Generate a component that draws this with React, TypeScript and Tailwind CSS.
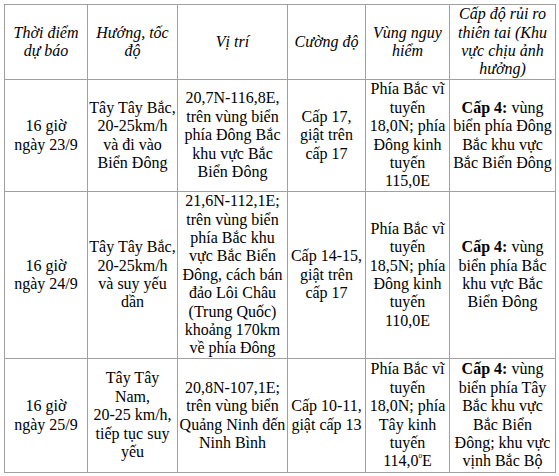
import type { ReactNode } from 'react';

type Cell = { lines: ReactNode[]; italic?: boolean };

const Bold = ({ children }: { children: ReactNode }) => <b className="font-bold">{children}</b>;

const header: Cell[] = [
  { lines: ['Thời điểm', 'dự báo'] },
  { lines: ['Hướng, tốc', 'độ'] },
  { lines: ['Vị trí'] },
  { lines: ['Cường độ'] },
  { lines: ['Vùng nguy', 'hiểm'] },
  { lines: ['Cấp độ rủi ro', 'thiên tai (Khu', 'vực chịu ảnh', 'hưởng)'] },
];

const rows: Cell[][] = [
  [
    { lines: ['16 giờ', 'ngày 23/9'] },
    { lines: ['Tây Tây Bắc,', '20-25km/h', 'và đi vào', 'Biển Đông'] },
    { lines: ['20,7N-116,8E,', 'trên vùng biển', 'phía Đông Bắc', 'khu vực Bắc', 'Biển Đông'] },
    { lines: ['Cấp 17,', 'giật trên', 'cấp 17'] },
    { lines: ['Phía Bắc vĩ', 'tuyến', '18,0N; phía', 'Đông kinh', 'tuyến', '115,0E'] },
    {
      lines: [
        <>
          <Bold>Cấp 4:</Bold> vùng
        </>,
        'biển phía Đông',
        'Bắc khu vực',
        'Bắc Biển Đông',
      ],
    },
  ],
  [
    { lines: ['16 giờ', 'ngày 24/9'] },
    { lines: ['Tây Tây Bắc,', '20-25km/h', 'và suy yếu', 'dần'] },
    {
      lines: [
        '21,6N-112,1E;',
        'trên vùng biển',
        'phía Bắc khu',
        'vực Bắc Biển',
        'Đông, cách bán',
        'đảo Lôi Châu',
        '(Trung Quốc)',
        'khoảng 170km',
        'về phía Đông',
      ],
    },
    { lines: ['Cấp 14-15,', 'giật trên', 'cấp 17'] },
    { lines: ['Phía Bắc vĩ', 'tuyến', '18,5N; phía', 'Đông kinh', 'tuyến', '110,0E'] },
    {
      lines: [
        <>
          <Bold>Cấp 4:</Bold> vùng
        </>,
        'biển phía Bắc',
        'khu vực Bắc',
        'Biển Đông',
      ],
    },
  ],
  [
    { lines: ['16 giờ', 'ngày 25/9'] },
    { lines: ['Tây Tây', 'Nam,', '20-25 km/h,', 'tiếp tục suy', 'yếu'] },
    { lines: ['20,8N-107,1E;', 'trên vùng biển', 'Quảng Ninh đến', 'Ninh Bình'] },
    { lines: ['Cấp 10-11,', 'giật cấp 13'] },
    {
      lines: [
        'Phía Bắc vĩ',
        'tuyến',
        '18,0N; phía',
        'Tây kinh',
        'tuyến',
        <>
          114,0<sup className="text-[7px] align-[5px]">0</sup>E
        </>,
      ],
    },
    {
      lines: [
        <>
          <Bold>Cấp 4:</Bold> vùng
        </>,
        'biển phía Tây',
        'Bắc khu vực',
        'Bắc Biển',
        'Đông; khu vực',
        'vịnh Bắc Bộ',
      ],
    },
  ],
];

function TableCell({ cell, italic }: { cell: Cell; italic?: boolean }) {
  return (
    <div className="bg-white flex flex-col items-center justify-center text-center">
      {cell.lines.map((line, i) => (
        <span key={i} className={`whitespace-nowrap ${italic ? 'italic' : ''}`}>
          {line}
        </span>
      ))}
    </div>
  );
}

export default function App() {
  return (
    <div className="w-[559px] h-[476px] bg-white p-[4px] font-['Liberation_Serif','Times_New_Roman',serif] text-[16px] leading-[18.4px] text-black">
      <div className="grid w-max gap-px bg-[#a0a0a0] p-px grid-cols-[82px_89px_109px_77px_83px_105px] grid-rows-[74px_111px_166px_113px]">
        {header.map((c, i) => (
          <TableCell key={`h${i}`} cell={c} italic />
        ))}
        {rows.map((row, r) =>
          row.map((c, i) => <TableCell key={`${r}-${i}`} cell={c} />)
        )}
      </div>
    </div>
  );
}
